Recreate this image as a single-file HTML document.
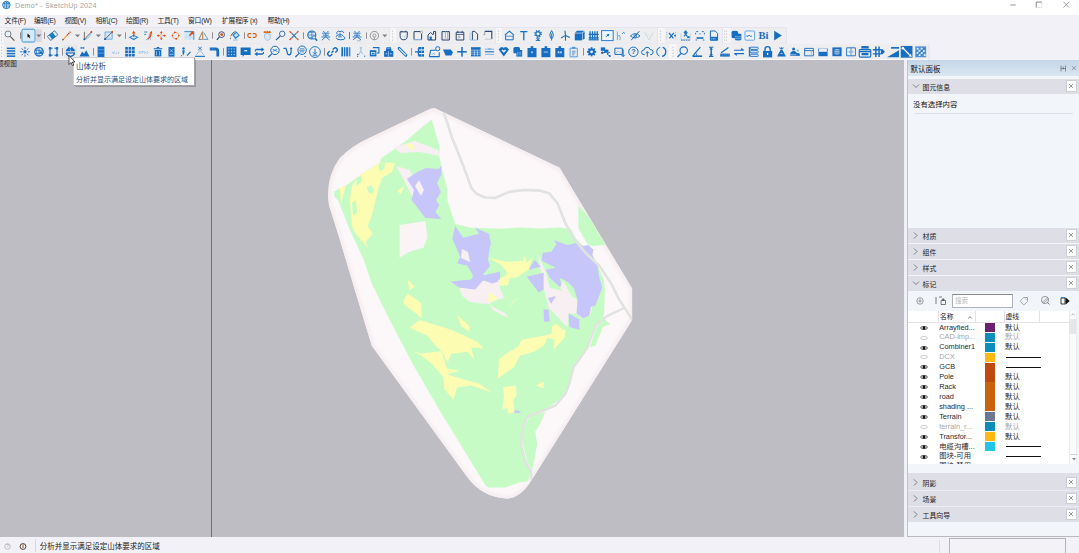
<!DOCTYPE html><html lang="zh"><head><meta charset="utf-8"><title>Demo - SketchUp 2024</title><style>
*{box-sizing:border-box;margin:0;padding:0}
html,body{width:1079px;height:553px;overflow:hidden;background:#f1f1f7}
body{font-family:"Liberation Sans","Noto Sans CJK SC",sans-serif;font-size:7px;color:#111;position:relative}
.abs{position:absolute}
#title{left:0;top:0;width:1079px;height:14.6px;background:#fff}
#title .t{position:absolute;left:15px;top:1px;font-size:7.2px;letter-spacing:0.2px;color:#a4a4a4;white-space:nowrap;line-height:10px}
#title .wc{position:absolute;top:0;height:14px;width:26px;color:#333}
#menu{left:0;top:14.6px;width:1079px;height:12.4px;background:#f1f1f7}
#menu span{position:absolute;top:0.6px;font-size:6.8px;letter-spacing:-0.2px;line-height:11px;color:#1c1c1c;white-space:nowrap}
#tb1{left:0;top:27px;width:1079px;height:17px;background:transparent}
#tb2{left:0;top:44px;width:1079px;height:16px;background:transparent}
#view{left:0;top:60.2px;width:904px;height:476.8px;background:#bdbdc3;overflow:hidden}
#status{left:0;top:537px;width:1079px;height:16px;background:#f1f1f7}
svg{position:absolute;overflow:visible}
</style></head><body>
<div id="title" class="abs"><svg style="left:2.2px;top:0.4px" width="10" height="10" viewBox="0 0 10 10"><circle cx="4.4" cy="5" r="3.7" fill="#e8f2fa" stroke="#1a78c2" stroke-width="1"/><path d="M2.8 2.6v4.8M4.4 1.8v6.4M6 2.6v4.8" stroke="#1a78c2" stroke-width="0.9" fill="none"/><path d="M1.2 3.8Q4.4 2.2 7.6 3.8" stroke="#1a78c2" stroke-width="0.8" fill="none"/></svg><div class="t">Demo* - SketchUp 2024</div><svg style="left:1006px;top:1.4px" width="70" height="8" viewBox="0 0 70 8"><path d="M4.2 4h5.6" stroke="#555" stroke-width="0.6"/><path d="M30.2 6.6V1.1h5.6" fill="none" stroke="#555" stroke-width="0.7"/><path d="M35.8 1.1v5.5h-5.6" fill="none" stroke="#bbb" stroke-width="0.4"/><path d="M57.4 0.8l5.8 5.8M63.2 0.8l-5.8 5.8" stroke="#555" stroke-width="0.55"/></svg></div>
<div id="menu" class="abs"><span style="left:4.6px">文件(F)</span><span style="left:34px">编辑(E)</span><span style="left:64.4px">视图(V)</span><span style="left:95.4px">相机(C)</span><span style="left:126px">绘图(R)</span><span style="left:157.4px">工具(T)</span><span style="left:188px">窗口(W)</span><span style="left:222px">扩展程序 (x)</span><span style="left:267.4px">帮助(H)</span></div>
<div class="abs" style="left:0;top:28px;width:786.4px;height:15.2px;background:#eeeef0"></div>
<div class="abs" style="left:0px;top:28px;width:3.6px;height:15.2px;background:#f6f6f9"></div>
<div class="abs" style="left:389.9px;top:28px;width:6.1px;height:15.2px;background:#f6f6f9"></div>
<div class="abs" style="left:495.9px;top:28px;width:6.1px;height:15.2px;background:#f6f6f9"></div>
<div class="abs" style="left:658px;top:28px;width:6.8px;height:15.2px;background:#f6f6f9"></div>
<div class="abs" style="left:723px;top:28px;width:8.0px;height:15.2px;background:#f6f6f9"></div>
<div class="abs" style="left:0;top:44.4px;width:929px;height:14.6px;background:#eeeef0"></div>
<div class="abs" style="left:0px;top:44.4px;width:3.6px;height:14.6px;background:#f6f6f9"></div>
<div class="abs" style="left:669.4px;top:44.4px;width:7.6px;height:14.6px;background:#f6f6f9"></div>
<div class="abs" style="left:0;top:59px;width:929px;height:1.4px;background:#f7f7fa"></div>
<div id="tb1" class="abs"><svg style="left:0;top:0" width="1079" height="17" viewBox="0 0 1079 17"><rect x="389.1" y="0.2" width="0.8" height="16.4" fill="#e2e2ea"/><rect x="495.1" y="0.2" width="0.8" height="16.4" fill="#e2e2ea"/><rect x="657.2" y="0.2" width="0.8" height="16.4" fill="#e2e2ea"/><rect x="722.2" y="0.2" width="0.8" height="16.4" fill="#e2e2ea"/><rect x="786.0" y="0.2" width="0.8" height="16.4" fill="#e2e2ea"/><rect x="0" y="15.9" width="786.4" height="0.7" fill="#e4e4ec"/><rect x="0" y="0.2" width="786.4" height="0.8" fill="#e3e3ea"/><rect x="1.1500000000000001" y="3.5999999999999996" width="0.9" height="1" fill="#b0b0b8"/><rect x="1.1500000000000001" y="6.6" width="0.9" height="1" fill="#b0b0b8"/><rect x="1.1500000000000001" y="9.6" width="0.9" height="1" fill="#b0b0b8"/><rect x="1.1500000000000001" y="12.6" width="0.9" height="1" fill="#b0b0b8"/><g transform="translate(9.4,8.6)"><circle cx="-1.4" cy="-1.6" r="3" fill="#e8f0f8" stroke="#777" stroke-width="0.9"/><path d="M0.8 0.8L5 5" fill="none" stroke="#555" stroke-width="1.1" /></g><rect x="20.1" y="5.35" width="0.8" height="6.5" fill="#76767c"/><g transform="translate(28.5,8.6)"><rect x="-6.6" y="-6.4" width="13.2" height="12.8" rx="1.6" fill="#d5e9f9" stroke="#2a86d4" stroke-width="0.9"/><rect x="7.2" y="-6.4" width="6.2" height="12.8" fill="#dadade"/><path d="M-1 -2.2v4.2l1-0.9 0.7 1.5 0.8-0.4-0.7-1.5h1.3z" fill="#111" /><path d="M7.700000000000001 -1.0h5.2l-2.6 2.7z" fill="#77777d"/></g><rect x="44.1" y="5.35" width="0.8" height="6.5" fill="#76767c"/><g transform="translate(52.6,8.6)"><g transform="rotate(-38)"><rect x="-4.6" y="-2.6" width="9.2" height="5.2" fill="#e4eef8" /><rect x="-2.6" y="-2.6" width="4.6" height="5.2" fill="#1680c4" /><rect x="-4.6" y="-2.6" width="9.2" height="5.2" fill="none" stroke="#2b5c86" stroke-width="0.7"/></g></g><g transform="translate(66.8,8.6)"><path d="M-3.2 3.4L0.2 -0.2" fill="none" stroke="#f0a040" stroke-width="1.2" /><path d="M0.2 -0.2L3.6 -3.8" fill="none" stroke="#d8341a" stroke-width="1.3" stroke-dasharray="1.3 0.7"/><path d="M-4.6 4.8l0.5-1.9 1.4 1.4z" fill="#333" /></g><path d="M74.9 7.599999999999999h5.2l-2.6 2.7z" fill="#808086"/><g transform="translate(88,8.6)"><path d="M-3.6 -3.8v7.6" fill="none" stroke="#666" stroke-width="0.9" /><path d="M-3.6 3.8L3.4 -3.6" fill="none" stroke="#555" stroke-width="0.9" /><path d="M-3.6 3.8Q2 3 3.4 -3.6" fill="none" stroke="#7fb2e0" stroke-width="0.8" /><circle cx="3.4" cy="-3.6" r="1" fill="#e0451a" stroke="#e0451a" stroke-width="0"/><rect x="-4.4" y="3" width="1.6" height="1.6" fill="#0d4f90" /></g><path d="M95.80000000000001 7.599999999999999h5.2l-2.6 2.7z" fill="#808086"/><g transform="translate(108.6,8.6)"><rect x="-3.6" y="-3.6" width="7.2" height="7.2" fill="#cfe4f6" /><path d="M-3.6 -3.6h7.2v7.2h-7.2z" fill="none" stroke="#5a9ed8" stroke-width="0.8" /><path d="M-3.6 3.6L3.6 -3.6" fill="none" stroke="#555" stroke-width="0.9" /><circle cx="3.6" cy="-3.6" r="1" fill="#e0451a" stroke="#e0451a" stroke-width="0"/><rect x="-4.4" y="2.8" width="1.6" height="1.6" fill="#0d4f90" /></g><path d="M116.80000000000001 7.599999999999999h5.2l-2.6 2.7z" fill="#808086"/><rect x="125.1" y="5.35" width="0.8" height="6.5" fill="#76767c"/><g transform="translate(133.7,8.6)"><path d="M-5 1.6L0 -0.8L5 1.6L0 4.6z" fill="#2a86d4" /><path d="M-3 1.6L0 0.2L3 1.6L0 3.2z" fill="#cfe4f6" /><path d="M0 1.2v-3.4" fill="none" stroke="#dc4a14" stroke-width="1.3" /><path d="M-1.8 -2l1.8-2.8 1.8 2.8z" fill="#dc4a14" /></g><g transform="translate(147.8,8.6)"><path d="M-3.6 -3.6h3.2M-3.6 -1.2h2" fill="none" stroke="#166dc1" stroke-width="0.8" /><path d="M-1.6 4.4Q2.4 2.4 1.6 -2" fill="none" stroke="#7fb2e0" stroke-width="1.1" /><path d="M0.2 3.4Q3.6 1 3.2 -2.8" fill="none" stroke="#e0451a" stroke-width="1.2" /><path d="M1.8 -2.4l1.8-2.4 1 2.8z" fill="#dc4a14" /><path d="M2.6 2.4v2.2" fill="none" stroke="#7fb2e0" stroke-width="0.8" /></g><g transform="translate(161.3,8.6)"><path d="M-3.8 0h7.6M0 -3.8v7.6" fill="none" stroke="#dc4a14" stroke-width="0.8" /><path d="M-1.3 -2.6L0 -4.6 1.3 -2.6zM-1.3 2.6L0 4.6 1.3 2.6zM-2.6 -1.3L-4.6 0-2.6 1.3zM2.6 -1.3L4.6 0 2.6 1.3z" fill="#dc4a14" /><circle cx="0" cy="0" r="1.2" fill="#eeeef0" stroke="#eeeef0" stroke-width="0"/></g><g transform="translate(175.6,8.6)"><circle cx="0" cy="0" r="3.2" fill="none" stroke="#f0a468" stroke-width="0.9"/><path d="M-1.4 -4.2L1.2 -3.3L-1.4 -2.2zM1.4 4.2L-1.2 3.3L1.4 2.2z" fill="#dc4a14" /><rect x="-3.9" y="-0.6" width="1.4" height="1.2" fill="#dc4a14" /><rect x="2.5" y="-0.6" width="1.4" height="1.2" fill="#dc4a14" /><rect x="-1.2" y="-3.4" width="2.6" height="1.1" fill="#eeeef0"  opacity="0"/></g><g transform="translate(189.2,8.6)"><rect x="-4.8" y="-4" width="9.4" height="8.2" fill="#d2e7f8" /><path d="M-4.8 -4h9.4v8.2" fill="none" stroke="#3a92dc" stroke-width="1" /><path d="M0.8 -3.4v7.4M-4.8 1.4h9" fill="none" stroke="#b4d4ee" stroke-width="0.5" /><path d="M0.2 0.2L3 -2.8" fill="none" stroke="#dc4a14" stroke-width="1.5" /><path d="M0.8 -4h3.6v3.6z" fill="#dc4a14" /></g><g transform="translate(203.4,8.6)"><path d="M-4.6 3.8L-0.8 -4L-0.8 3.8z" fill="none" stroke="#777" stroke-width="0.9" /><path d="M-0.2 3.8h4.8L0.4 -2.8" fill="none" stroke="#4c96d8" stroke-width="0.9" /><path d="M-0.6 -3.4v7" fill="none" stroke="#f0a030" stroke-width="0.8" /></g><rect x="212.1" y="5.35" width="0.8" height="6.5" fill="#76767c"/><g transform="translate(220.8,8.6)"><circle cx="0.8" cy="-1" r="2.9" fill="#eeeef0" stroke="#2c4a78" stroke-width="0.9"/><circle cx="0.9" cy="-1" r="1.4" fill="#dc4a14" stroke="#dc4a14" stroke-width="0"/><path d="M-1.4 1.2L-4 4.2" fill="none" stroke="#2c4a78" stroke-width="1.1" /></g><g transform="translate(235,8.6)"><path d="M-2.8 -0.8L1.6 -4.2L4.8 0L0.4 3.6z" fill="#2a86d4" /><path d="M-1 -0.6L1.6 -2.6L3.2 -0.4L0.6 1.6z" fill="#cfe4f6" /><path d="M-4.4 0.6Q-2.4 -3.6 0.6 -4.2" fill="none" stroke="#555" stroke-width="0.9" /><path d="M-4.8 1.6Q-3.6 3 -4.4 4Q-5.6 3 -4.8 1.6z" fill="#555" /><path d="M-1.8 4.4h4.6" fill="none" stroke="#7fb2e0" stroke-width="0.8" /></g><rect x="244.1" y="5.35" width="0.8" height="6.5" fill="#76767c"/><g transform="translate(252,8.6)"><path d="M-1 -2H-2.8Q-4.2 -2 -4.2 -0.1Q-4.2 1.8 -2.8 1.8H-1M1 -2H2.8Q4.2 -2 4.2 -0.1Q4.2 1.8 2.8 1.8H1" fill="none" stroke="#e0560f" stroke-width="1.15" /><path d="M0 -4.4v8.8" fill="none" stroke="#c4d8ea" stroke-width="0.7" /></g><g transform="translate(267,8.6)"><path d="M-2.6 -0.6Q-2.6 -2.2 0.4 -2.2Q3.4 -2.2 3.4 0.4Q3.4 4.6 0.6 4.6Q-2.6 4.6 -2.6 -0.6z" fill="#dbe9f6" /><path d="M-2.6 -0.6Q-2.6 -2.2 0.4 -2.2Q3.4 -2.2 3.4 0.4Q3.4 4.6 0.6 4.6Q-2.6 4.6 -2.6 -0.6z" fill="none" stroke="#7fb2e0" stroke-width="0.7" /><path d="M-3.4 -3.4h7.2" fill="none" stroke="#e8741a" stroke-width="1.5" /><path d="M-2 -4.6v2M0.4 -4.8v2M2.6 -4.6v2" fill="none" stroke="#dc4a14" stroke-width="0.9" /></g><g transform="translate(280.6,8.6)"><circle cx="1.6" cy="-1.8" r="2.7" fill="#f6f8fc" stroke="#2c5f9a" stroke-width="0.9"/><path d="M-0.4 0.4L-4.6 4.6" fill="none" stroke="#2c5f9a" stroke-width="1.2" /></g><g transform="translate(294,8.6)"><path d="M-2.4 -2.4l4.8 4.8M2.4 -2.4l-4.8 4.8" fill="none" stroke="#3a78bc" stroke-width="1.2" /><path d="M-4.4 -4.4l1.8 1.8M4.4 -4.4l-1.8 1.8M-4.4 4.4l1.8-1.8M4.4 4.4l-1.8-1.8" fill="none" stroke="#dc4a14" stroke-width="1.2" /></g><rect x="303.1" y="5.35" width="0.8" height="6.5" fill="#76767c"/><g transform="translate(312.2,8.6)"><circle cx="-0.4" cy="-0.6" r="4" fill="none" stroke="#166dc1" stroke-width="1.1"/><path d="M-0.4 -4.6v8M-4.4 -0.6h8M-3 -3h5.2M-3 1.8h5.2" fill="none" stroke="#166dc1" stroke-width="0.6" /><path d="M2.6 2.6L5 5" fill="none" stroke="#166dc1" stroke-width="1.5" /><circle cx="1.8" cy="1.8" r="1.6" fill="#eeeef0" stroke="#166dc1" stroke-width="0.8"/></g><g transform="translate(325.8,8.6)"><path d="M-2.6 -4.6l1.4 1.6M2.6 -4.6l-1.4 1.6M-3.6 -2.4h7.2M-3 -0.4h6M-4.4 1.4h8.8M0 -2.4v3.8M-0.4 1.6L-4 4.6M0.4 1.6L4 4.6" fill="none" stroke="#166dc1" stroke-width="0.85" /></g><g transform="translate(340.6,8.6)"><path d="M-3.4 -1.4a1.8 1.8 0 0 1 2.8-2.4a2.2 2.2 0 0 1 3.8 1.2" fill="none" stroke="#166dc1" stroke-width="0.9" /><path d="M-4.4 1.2Q-4.4 -0.8 -1.6 -0.8H1.2Q3 0.8 4.6 2.4" fill="none" stroke="#166dc1" stroke-width="0.9" /><path d="M-4.4 2.2Q-4 4.2 0 4.2Q4 4.2 4.6 2.6" fill="none" stroke="#166dc1" stroke-width="1" /><path d="M-2.4 1.2h3.6M-0.6 -3v4" fill="none" stroke="#166dc1" stroke-width="0.8" /></g><rect x="349.1" y="5.1" width="0.8" height="7" fill="#555"/><g transform="translate(357,8.6)"><path d="M-2.6 -4.6l1.4 1.6M2.6 -4.6l-1.4 1.6M-3.6 -2.4h7.2M-3 -0.4h6M-4.4 1.4h8.8M0 -2.4v3.8M-0.4 1.6L-4 4.2M0.4 1.6L4 4.2" fill="none" stroke="#166dc1" stroke-width="0.85" /><path d="M0.4 5.2h4" fill="none" stroke="#166dc1" stroke-width="0.8" stroke-dasharray="1 1"/></g><rect x="366.1" y="5.35" width="0.8" height="6.5" fill="#76767c"/><g transform="translate(374.4,8.6)"><circle cx="0" cy="0" r="4.2" fill="none" stroke="#8a8a90" stroke-width="0.9"/><circle cx="0" cy="0" r="1.6" fill="none" stroke="#8a8a90" stroke-width="0.8"/><path d="M0 1.6v2.6" fill="none" stroke="#8a8a90" stroke-width="0.8" /></g><path d="M382.2 7.599999999999999h5.2l-2.6 2.7z" fill="#808086"/><rect x="392.15000000000003" y="3.5999999999999996" width="0.9" height="1" fill="#b0b0b8"/><rect x="392.15000000000003" y="6.6" width="0.9" height="1" fill="#b0b0b8"/><rect x="392.15000000000003" y="9.6" width="0.9" height="1" fill="#b0b0b8"/><rect x="392.15000000000003" y="12.6" width="0.9" height="1" fill="#b0b0b8"/><g transform="translate(403.7,8.6)"><path d="M-3.6 -3.8h7.2v3.8Q3.6 4.2 0 4.2Q-3.6 4.2 -3.6 0z" fill="none" stroke="#27456f" stroke-width="1" /><path d="M-2 -4.8v1.4M2 -4.8v1.4" fill="none" stroke="#27456f" stroke-width="0.8" /><path d="M0.2 0h2.4l-2.4 2.8z" fill="#c4dcf0" /></g><g transform="translate(418,8.6)"><path d="M-4 -4h7.6v8h-7.6z" fill="none" stroke="#27456f" stroke-width="1" /><circle cx="3.4" cy="-3.4" r="1.2" fill="#eeeef0" stroke="#999" stroke-width="0.7"/><path d="M-4 4h7.6" fill="none" stroke="#8fb8dc" stroke-width="1" /></g><g transform="translate(432,8.6)"><path d="M-4 4.4V-0.6L-1.4 -3.2L1.2 -0.6M3.6 4.4V-4.2H1.6v3" fill="none" stroke="#27456f" stroke-width="1" /><rect x="-2.4" y="1" width="2.2" height="3.4" fill="#166dc1" /><path d="M-4 4.4h7.6" fill="none" stroke="#27456f" stroke-width="1" /></g><g transform="translate(445.8,8.6)"><path d="M-3.8 -4h7.4v8.4h-7.4z" fill="none" stroke="#27456f" stroke-width="1" /><path d="M-0.4 -4v8.4" fill="none" stroke="#8fb8dc" stroke-width="1" /><path d="M1.8 -4v8.4" fill="none" stroke="#999" stroke-width="0.7" /></g><g transform="translate(460,8.6)"><path d="M-3.8 -3.4h7.6v7.8h-7.6z" fill="none" stroke="#27456f" stroke-width="1" /><path d="M-3.8 -1.2h7.6" fill="none" stroke="#27456f" stroke-width="0.8" /><path d="M-2.2 -4.8v2M2.2 -4.8v2" fill="none" stroke="#27456f" stroke-width="0.8" /><path d="M-2.2 0.6h2v1.6h-2" fill="none" stroke="#888" stroke-width="0.6" /></g><g transform="translate(473.8,8.6)"><path d="M-1.4 4.4V-4.2H1L3.8 -1.4V4.4" fill="none" stroke="#27456f" stroke-width="1" /><path d="M-3.8 4.4V-2.4h2.4" fill="none" stroke="#b8c4d0" stroke-width="0.9" /><path d="M-3.8 4.4h7.6" fill="none" stroke="#8fb8dc" stroke-width="0.9" /></g><g transform="translate(488,8.6)"><path d="M-3.2 -4.2h7v7.6" fill="none" stroke="#27456f" stroke-width="1.1" /><path d="M-3.2 -4.2v3.2h-1.4" fill="none" stroke="#888" stroke-width="0.8" /><path d="M-3.2 3.6h7" fill="none" stroke="#c4c8d0" stroke-width="1" /></g><rect x="497.95" y="3.5999999999999996" width="0.9" height="1" fill="#b0b0b8"/><rect x="497.95" y="6.6" width="0.9" height="1" fill="#b0b0b8"/><rect x="497.95" y="9.6" width="0.9" height="1" fill="#b0b0b8"/><rect x="497.95" y="12.6" width="0.9" height="1" fill="#b0b0b8"/><g transform="translate(509.4,8.6)"><path d="M-4.6 -0.4L0 -4.4L4.6 -0.4" fill="none" stroke="#166dc1" stroke-width="1.1" /><path d="M-3.8 -0.2V4.2H3.8V-0.2" fill="none" stroke="#166dc1" stroke-width="1" /><path d="M-3.8 0.6h7.6" fill="none" stroke="#166dc1" stroke-width="0.7" /></g><g transform="translate(523.8,8.6)"><path d="M-3.6 -4h7.2M0 -4v8.6" fill="none" stroke="#166dc1" stroke-width="1.3" /></g><g transform="translate(538,8.6)"><circle cx="0" cy="-1.8" r="2.2" fill="none" stroke="#166dc1" stroke-width="1.2"/><circle cx="0" cy="-1.8" r="3.3" fill="none" stroke="#166dc1" stroke-width="1.2" stroke-dasharray="1.3 1.3"/><path d="M0 1v3.8M-2.2 4.8h4.4M-1.6 2.8L0 3.8l1.6-1" fill="none" stroke="#166dc1" stroke-width="1" /></g><g transform="translate(551.6,8.6)"><path d="M0 -5Q-3.4 0 0 3.4Q3.4 0 0 -5z" fill="none" stroke="#166dc1" stroke-width="1" /><path d="M0 -2v7" fill="none" stroke="#166dc1" stroke-width="0.9" /></g><g transform="translate(565.5,8.6)"><path d="M0 0.4v4.8" fill="none" stroke="#166dc1" stroke-width="1" /><path d="M0 -0.2L-0.6 -5M0 -0.2L4.4 2M0 -0.2L-4.4 2.4" fill="none" stroke="#166dc1" stroke-width="1.1" /></g><g transform="translate(579.6,8.6)"><path d="M-4.8 -2.2h7.2v7h-7.2z" fill="#166dc1" /><path d="M-4.8 -2.8L-2.6 -4.8H4.8L2.4 -2.8z" fill="#166dc1" /><path d="M3 -2.4L5 -4.4V2.6L3 4.6z" fill="#166dc1" /></g><g transform="translate(593.7,8.6)"><path d="M-3.6 -4.4v8M-1.2 -4.4v8M1.2 -4.4v8M3.6 -4.4v8" fill="none" stroke="#166dc1" stroke-width="1.3" /><path d="M-5 -1.2h10M-5 2.2h10" fill="none" stroke="#166dc1" stroke-width="1.2" /><rect x="-5" y="3.6" width="10" height="1.2" fill="#166dc1" /></g><g transform="translate(607.4,8.6)"><rect x="-5.8" y="-5" width="11.6" height="10" fill="#eef5fc" stroke="#2a7fd0" stroke-width="1"/><path d="M-1 -1.2l3-0.6-0.8 2.8-0.8-0.8-1.4 1.2-0.6-0.6 1.4-1.2z" fill="#166dc1" /></g><g transform="translate(620.6,8.6)"><path d="M-3.2 -4v8.6M-3.2 0.6Q-0.6 -1 -0.6 1.4V4.6" fill="none" stroke="#7fb2e0" stroke-width="1.1" /><path d="M1.4 -1.6l1.6-1.6 1.4 1.2" fill="none" stroke="#166dc1" stroke-width="0.8" /></g><g transform="translate(635.2,8.6)"><path d="M-4.8 0.4Q0 -4.4 4.8 0.4Q0 4.4 -4.8 0.4z" fill="none" stroke="#166dc1" stroke-width="0.9" /><circle cx="0" cy="0.4" r="1.3" fill="none" stroke="#166dc1" stroke-width="0.8"/><path d="M-4 4.6L4.2 -4.4" fill="none" stroke="#166dc1" stroke-width="1" /></g><g transform="translate(649,8.6)"><path d="M-4.4 -3.4L0 4.4L4.4 -3.4" fill="none" stroke="#c8d4e2" stroke-width="0.8" /><path d="M-2.2 -3.4L0 0.6 2.2 -3.4" fill="none" stroke="#dde4ee" stroke-width="0.6" /></g><rect x="660.15" y="3.5999999999999996" width="0.9" height="1" fill="#b0b0b8"/><rect x="660.15" y="6.6" width="0.9" height="1" fill="#b0b0b8"/><rect x="660.15" y="9.6" width="0.9" height="1" fill="#b0b0b8"/><rect x="660.15" y="12.6" width="0.9" height="1" fill="#b0b0b8"/><g transform="translate(671.4,8.6)"><path d="M-2.4 -2.8l4.4 5.6M2.4 -2.8l-4.4 5.6" fill="none" stroke="#166dc1" stroke-width="1.2" /><path d="M-4.6 -3.6v7.2M4.2 -3.6v7.2" fill="none" stroke="#7fb2e0" stroke-width="0.8" stroke-dasharray="1.2 1"/><rect x="2.8" y="-0.8" width="1.6" height="1.6" fill="#166dc1" /></g><g transform="translate(685.6,8.6)"><path d="M-1.6 -3.6l3.2 4.4M1.8 -3.6l-3.4 4.4" fill="none" stroke="#166dc1" stroke-width="1.2" /><circle cx="0" cy="-3.8" r="1.2" fill="#166dc1" stroke="#166dc1" stroke-width="0"/><path d="M-4.6 -2v5.8h9.2v-5.8" fill="none" stroke="#7fb2e0" stroke-width="0.8" stroke-dasharray="1.2 0.8"/><path d="M-4.6 4.6h9.2" fill="none" stroke="#166dc1" stroke-width="0.9" stroke-dasharray="1.6 0.8"/><rect x="1.6" y="0.6" width="2.4" height="2" fill="#166dc1" /></g><g transform="translate(700,8.6)"><path d="M-3.8 -4h2M3.8 -4h-2M-4.4 -2.8v1.6M4.4 -2.8v1.6" fill="none" stroke="#166dc1" stroke-width="0.9" /><path d="M-1.2 -0.8L0 -2.6 1.2 -0.8" fill="none" stroke="#7fb2e0" stroke-width="0.8" /><rect x="-3.4" y="1.6" width="6.8" height="1.6" fill="#166dc1" /><path d="M-4.4 4.4h1.6M4.4 4.4h-1.6" fill="none" stroke="#166dc1" stroke-width="0.9" /></g><g transform="translate(714,8.6)"><path d="M-3.6 -4.6h4.8L3.6 -2.2V4.6h-7.2z" fill="none" stroke="#166dc1" stroke-width="1" /><rect x="-3.6" y="1.2" width="7.2" height="3.6" fill="#166dc1" /><path d="M-2.2 2.4v1.6M-0.6 2.4v1.6M1 2.4v1.6" fill="none" stroke="#cfe2f4" stroke-width="0.6" /></g><rect x="724.15" y="3.5999999999999996" width="0.9" height="1" fill="#b0b0b8"/><rect x="724.15" y="6.6" width="0.9" height="1" fill="#b0b0b8"/><rect x="724.15" y="9.6" width="0.9" height="1" fill="#b0b0b8"/><rect x="724.15" y="12.6" width="0.9" height="1" fill="#b0b0b8"/><rect x="726.15" y="3.5999999999999996" width="0.9" height="1" fill="#b0b0b8"/><rect x="726.15" y="6.6" width="0.9" height="1" fill="#b0b0b8"/><rect x="726.15" y="9.6" width="0.9" height="1" fill="#b0b0b8"/><rect x="726.15" y="12.6" width="0.9" height="1" fill="#b0b0b8"/><g transform="translate(736.4,8.6)"><path d="M-4.8 -3.4Q-4.8 -4.8 -1.6 -4.8Q1.6 -4.8 1.6 -3.4V1.4Q1.6 2.6 -1.6 2.6Q-4.8 2.6 -4.8 1.4z" fill="#166dc1" /><path d="M-1.4 -0.8Q-1.4 -2 1.8 -2Q5 -2 5 -0.8V3.6Q5 4.8 1.8 4.8Q-1.4 4.8 -1.4 3.6z" fill="#166dc1" /><path d="M-1.4 0.8Q1.8 2 5 0.8M-1.4 2.6Q1.8 3.8 5 2.6" fill="none" stroke="#cfe2f4" stroke-width="0.5" /></g><g transform="translate(749.8,8.6)"><rect x="-4.8" y="-4.6" width="9.6" height="9.2" rx="1" fill="#eef4fa" stroke="#5a9ed8" stroke-width="0.9"/><path d="M-2.6 0.6h1.2l0.8-1.2 0.8 1.2h2" fill="none" stroke="#166dc1" stroke-width="0.8" /><path d="M-2.8 -0.4v1.8" fill="none" stroke="#166dc1" stroke-width="0.7" /></g><g transform="translate(763.4,8.6)"><text x="0" y="3.6" font-size="10.5" fill="#166dc1" font-weight="bold" text-anchor="middle" font-family="Liberation Serif, serif">Bi</text></g><g transform="translate(777.6,8.6)"><path d="M-3.4 -4.8L4.2 0L-3.4 4.8z" fill="#166dc1" /></g></svg></div>
<div id="tb2" class="abs"><svg style="left:0;top:0" width="1079" height="16" viewBox="0 0 1079 16"><rect x="63.6" y="1" width="13.8" height="13.8" fill="#e6e6ea"/><rect x="1.1500000000000001" y="2.8" width="0.9" height="1" fill="#b0b0b8"/><rect x="1.1500000000000001" y="5.8" width="0.9" height="1" fill="#b0b0b8"/><rect x="1.1500000000000001" y="8.8" width="0.9" height="1" fill="#b0b0b8"/><rect x="1.1500000000000001" y="11.8" width="0.9" height="1" fill="#b0b0b8"/><g transform="translate(11,7.8)"><rect x="-4.2" y="-4.2" width="8.4" height="1.5" fill="#166dc1" /><rect x="-4.2" y="-1.6" width="8.4" height="1.5" fill="#166dc1" /><rect x="-4.2" y="1" width="8.4" height="1.5" fill="#166dc1" /><rect x="-4.2" y="3.6" width="8.4" height="1.5" fill="#166dc1" /></g><g transform="translate(25,7.8)"><circle cx="0" cy="0" r="1.7" fill="#166dc1" stroke="#166dc1" stroke-width="0"/><path d="M0 -5v2.3M0 2.7v2.3M-5 0h2.3M2.7 0h2.3M-3.5 -3.5l1.6 1.6M1.9 1.9l1.6 1.6M3.5 -3.5l-1.6 1.6M-1.9 1.9l-1.6 1.6" fill="none" stroke="#166dc1" stroke-width="0.9" /></g><g transform="translate(39,7.8)"><circle cx="0" cy="0" r="4.3" fill="none" stroke="#166dc1" stroke-width="1.1"/><path d="M0 -4.3v8.6M-4 -1.5h8M-4 1.5h8M-1 -4C-3 -2 -3 2 -1 4" fill="none" stroke="#166dc1" stroke-width="0.8" /><rect x="0.5" y="-0.5" width="3" height="2.5" fill="#166dc1" /></g><g transform="translate(53.5,7.8)"><path d="M-3.5 -3.5h7v7h-7z" fill="none" stroke="#166dc1" stroke-width="1.1" /><rect x="-4.7" y="-4.7" width="2.4" height="2.4" fill="#166dc1" /><rect x="-4.7" y="2.3" width="2.4" height="2.4" fill="#166dc1" /><rect x="2.3" y="-4.7" width="2.4" height="2.4" fill="#166dc1" /><rect x="2.3" y="2.3" width="2.4" height="2.4" fill="#166dc1" /><rect x="-0.9" y="-4.6" width="1.8" height="2" fill="#eeeef0" /><rect x="-0.9" y="2.6" width="1.8" height="2" fill="#eeeef0" /></g><rect x="62.1" y="4.05" width="0.8" height="7.5" fill="#76767c"/><g transform="translate(70.4,7.8)"><path d="M-4.6 -0.6Q-4.4 -3 -2.6 -3.6L-1.6 -5.2L0 -3.4L1.6 -5.2L2.6 -3.6Q4.4 -3 4.6 -0.6z" fill="#166dc1" /><path d="M-1 -3l1 1.2 1-1.2-1 2.4z" fill="#e9e9f0" /><path d="M-4 1.2Q-3.6 4.2 0 4.6Q3.6 4.2 4 1.2" fill="none" stroke="#166dc1" stroke-width="1.5" /><rect x="-4.6" y="0.6" width="9.2" height="1.1" fill="#166dc1" /></g><g transform="translate(84.4,7.8)"><path d="M-5 4.6L-2.2 -0.4L-0.4 2L1.8 -1.6L5.2 4.6z" fill="#166dc1" /><path d="M-3.4 -4.9v2M-0.6 -4.9v2M-3.4 -3.9h2.8" fill="none" stroke="#166dc1" stroke-width="0.9" /></g><rect x="93.1" y="4.05" width="0.8" height="7.5" fill="#76767c"/><g transform="translate(101,7.8)"><rect x="-3.4" y="-5.2" width="6.8" height="10.6" fill="#166dc1" /><rect x="-3.2" y="-2.2" width="6.4" height="0.5" fill="#9cc4ea" /><rect x="-3.2" y="1" width="6.4" height="0.5" fill="#9cc4ea" /></g><g transform="translate(115.6,7.8)"><path d="M-3.5 0l1.5 2l1.2-2.5M0 1.5h1.5M2.2 0c1.5 0 1.5 2 0 2" fill="none" stroke="#7fb2e0" stroke-width="0.7" /></g><g transform="translate(130,7.8)"><rect x="-4.8" y="-4.8" width="2.7" height="2.7" fill="#166dc1" /><rect x="-4.8" y="-1.4" width="2.7" height="2.7" fill="#166dc1" /><rect x="-4.8" y="2" width="2.7" height="2.7" fill="#166dc1" /><rect x="-1.4" y="-4.8" width="2.7" height="2.7" fill="#166dc1" /><rect x="-1.4" y="-1.4" width="2.7" height="2.7" fill="#166dc1" /><rect x="-1.4" y="2" width="2.7" height="2.7" fill="#166dc1" /><rect x="2" y="-4.8" width="2.7" height="2.7" fill="#166dc1" /><rect x="2" y="-1.4" width="2.7" height="2.7" fill="#166dc1" /><rect x="2" y="2" width="2.7" height="2.7" fill="#166dc1" /></g><g transform="translate(143.7,7.8)"><path d="M-5 -0.5l1 2.2 1-2.2M-2.4 -0.3h2l-1.2 2.2M0.5 -0.3c1.6 0 1.6 2 0 2M3 -0.3c1.6 0 1.6 2.2 0 2.2" fill="none" stroke="#7fb2e0" stroke-width="0.7" /></g><g transform="translate(158,7.8)"><rect x="-3.3" y="-1.8" width="6.6" height="6.4" fill="#166dc1" /><rect x="-4.2" y="-3.6" width="8.4" height="1.1" fill="#166dc1" /><rect x="-1.3" y="-4.8" width="2.6" height="1" fill="#166dc1" /><rect x="-1.6" y="-0.6" width="0.6" height="4.2" fill="#cfe2f4" /><rect x="1" y="-0.6" width="0.6" height="4.2" fill="#cfe2f4" /></g><g transform="translate(171.5,7.8)"><rect x="-3" y="-4.8" width="6" height="9.6" fill="#166dc1" /><path d="M-1.5 -2.5l3 3M1.5 -2.5l-3 3M-2 2.5h4" fill="none" stroke="#cfe2f4" stroke-width="0.7" /></g><g transform="translate(185.5,7.8)"><circle cx="-2" cy="-3.3" r="1.2" fill="#166dc1" stroke="#166dc1" stroke-width="0"/><path d="M-3.2 -1.6h2.4l-0.5 3-1.2 2.6z" fill="#166dc1" /><path d="M1.5 3.8L5 0" fill="none" stroke="#166dc1" stroke-width="1.2" /><path d="M-4.6 4.4l1.4-1.2" fill="none" stroke="#166dc1" stroke-width="0.9" /></g><g transform="translate(200,7.8)"><path d="M-1.8 -5l3.6 3.2M1.8 -5l-3.6 3.2" fill="none" stroke="#166dc1" stroke-width="0.9" /><path d="M0 -1.5L-3.6 3M0 -1.5L3.6 3" fill="none" stroke="#7fb2e0" stroke-width="0.8" /><rect x="-5" y="4" width="10" height="1.1" fill="#166dc1" /></g><g transform="translate(214.4,7.8)"><path d="M-4.6 -2.8H1.2Q3.4 -2.8 3.4 -0.5V4.8" fill="none" stroke="#166dc1" stroke-width="2.8" /><path d="M-3.8 -2.8h4" fill="none" stroke="#9cc4ea" stroke-width="0.5" stroke-dasharray="0.8 0.8"/></g><rect x="223.1" y="4.05" width="0.8" height="7.5" fill="#76767c"/><g transform="translate(231.5,7.8)"><rect x="-4.9" y="-5.1" width="9.8" height="10.2" fill="#166dc1" /><rect x="-3.2" y="-3.4" width="1.1" height="1.1" fill="#cfe2f4" /><rect x="-3.2" y="-0.55" width="1.1" height="1.1" fill="#cfe2f4" /><rect x="-3.2" y="2.3" width="1.1" height="1.1" fill="#cfe2f4" /><rect x="-0.55" y="-3.4" width="1.1" height="1.1" fill="#cfe2f4" /><rect x="-0.55" y="-0.55" width="1.1" height="1.1" fill="#cfe2f4" /><rect x="-0.55" y="2.3" width="1.1" height="1.1" fill="#cfe2f4" /><rect x="2.1" y="-3.4" width="1.1" height="1.1" fill="#cfe2f4" /><rect x="2.1" y="-0.55" width="1.1" height="1.1" fill="#cfe2f4" /><rect x="2.1" y="2.3" width="1.1" height="1.1" fill="#cfe2f4" /></g><g transform="translate(245.6,7.8)"><path d="M-5 -4.4h10v7.6h-6.4l-1.6 2v-2h-2z" fill="#166dc1" /><rect x="-1.4" y="-1.6" width="3" height="1.1" fill="#fff" /></g><g transform="translate(259.4,7.8)"><path d="M-3.6 -2.2h6.4M3.6 2.2h-6.4" fill="none" stroke="#166dc1" stroke-width="1.5" /><path d="M2 -4.4l3 2.2-3 2.2zM-2 0l-3 2.2 3 2.2z" fill="#166dc1" /><path d="M-4 -2.2v2M4 2.2v-2" fill="none" stroke="#166dc1" stroke-width="1.1" /></g><g transform="translate(273.7,7.8)"><circle cx="1.3" cy="-1.4" r="4.2" fill="none" stroke="#166dc1" stroke-width="1"/><path d="M-1.8 1.8L-5.4 5.4" fill="none" stroke="#166dc1" stroke-width="1.3" /><path d="M-1.2 -2.6L3.8 -0.2M-1 -0.2L3.4 -2.8" fill="none" stroke="#166dc1" stroke-width="0.7" /></g><g transform="translate(287.5,7.8)"><path d="M-4 -3.5h2.4l1.2 3.5M-0.4 0c0 4 4 4 4 0v-3.5" fill="none" stroke="#166dc1" stroke-width="1.2" /><path d="M2.2 -2.8l1.4-2 1.4 2z" fill="#166dc1" /></g><g transform="translate(300.8,7.8)"><circle cx="1.3" cy="-1.6" r="4.2" fill="none" stroke="#166dc1" stroke-width="1"/><path d="M-1.8 1.6L-5.4 5.2" fill="none" stroke="#166dc1" stroke-width="1.3" /><path d="M-1 -3h4.6M-1.4 -1.5h5.4M-1 0h4.4" fill="none" stroke="#166dc1" stroke-width="0.7" /><rect x="3.4" y="4.4" width="1.8" height="0.7" fill="#166dc1" /></g><g transform="translate(315,7.8)"><circle cx="0" cy="0.2" r="5.4" fill="none" stroke="#166dc1" stroke-width="0.9"/><path d="M0 -3v5M-2 0.4l2 2 2-2M-2.4 3.4h4.8" fill="none" stroke="#166dc1" stroke-width="0.9" /></g><rect x="324.1" y="4.05" width="0.8" height="7.5" fill="#76767c"/><g transform="translate(332.5,7.8)"><path d="M-1 1l2-2" fill="none" stroke="#166dc1" stroke-width="1.4" /><path d="M0.2 -2.2l1.2-1.2a1.9 1.9 0 0 1 2.8 2.8l-1.4 1.4" fill="none" stroke="#166dc1" stroke-width="1.4" /><path d="M-0.2 2.2l-1.2 1.2a1.9 1.9 0 0 1-2.8-2.8l1.4-1.4" fill="none" stroke="#166dc1" stroke-width="1.4" /></g><g transform="translate(346.2,7.8)"><rect x="-4.8" y="-4.6" width="1.7" height="9.2" fill="#166dc1" /><rect x="-2.2" y="-4.6" width="1.3" height="9.2" fill="#166dc1" /><rect x="0" y="-4.6" width="1.7" height="9.2" fill="#166dc1" /><rect x="2.6" y="-4.6" width="1" height="9.2" fill="#166dc1" /><rect x="4.2" y="-4.6" width="0.6" height="9.2" fill="#7fb2e0" /></g><g transform="translate(360.6,7.8)"><path d="M-1 -4h2.6M0.3 -4v3.4M0.3 -0.6L-2.2 3.5M0.3 -0.6l2 3" fill="none" stroke="#7fb2e0" stroke-width="0.8" /><rect x="-3.6" y="2" width="1.2" height="1.2" fill="#166dc1" /><rect x="-3.6" y="4" width="1.2" height="1" fill="#166dc1" /><rect x="3.6" y="3.8" width="1" height="1.2" fill="#166dc1" /></g><g transform="translate(374.4,7.8)"><path d="M-1.5 -4.2h6v5.4h-2" fill="none" stroke="#166dc1" stroke-width="1.1" /><path d="M-4.6 -1.6h6.6v6.2h-6.6z" fill="#166dc1" /><rect x="-3.4" y="0.2" width="4.2" height="2.6" fill="#e4eef8" /><rect x="-2.6" y="1" width="2.6" height="1.2" fill="#166dc1" /></g><g transform="translate(388.7,7.8)"><path d="M-4.6 -0.8h9.2v5.8h-9.2z" fill="#166dc1" /><path d="M-3 -0.6L-2.2 -4.6H2.2L3 -0.6z" fill="#166dc1" /><rect x="-0.3" y="-0.6" width="0.6" height="5.4" fill="#cfe2f4" /><rect x="-3" y="1.6" width="1.8" height="0.8" fill="#cfe2f4" /><rect x="1.2" y="1.6" width="1.8" height="0.8" fill="#cfe2f4" /><rect x="-1.4" y="-3.4" width="2.8" height="0.6" fill="#9cc4ea" /></g><g transform="translate(402.5,7.8)"><path d="M-3.4 -3.4l6.8 6.8" fill="none" stroke="#166dc1" stroke-width="2.9" stroke-linecap="round"/><path d="M-3.2 -3.2l6.4 6.4" fill="none" stroke="#e4eef8" stroke-width="1.1" stroke-linecap="round"/></g><rect x="411.1" y="4.05" width="0.8" height="7.5" fill="#76767c"/><g transform="translate(420,7.8)"><path d="M-5 0h3.4M-1.6 -3.6v7.2" fill="none" stroke="#166dc1" stroke-width="1.2" /><rect x="-1.6" y="-4.8" width="5.6" height="2.4" fill="#166dc1" /><rect x="-1.6" y="-1.2" width="5.6" height="2.4" fill="#166dc1" /><rect x="-1.6" y="2.4" width="5.6" height="2.4" fill="#166dc1" /><rect x="1" y="-4.8" width="0.5" height="9.6" fill="#cfe2f4" /></g><g transform="translate(434.4,7.8)"><g transform="scale(1.1)"><path d="M-4.6 4.4L-3.4 -1.4H1.2M4.4 0.4V4.4H-4.6" fill="none" stroke="#166dc1" stroke-width="1" stroke-linejoin="round"/><circle cx="3" cy="-2.8" r="1.9" fill="#eeeef0" stroke="#166dc1" stroke-width="0.9"/><path d="M-2 2.6l1.4-1.6 1 1.6" fill="none" stroke="#7fb2e0" stroke-width="0.7" /></g></g><g transform="translate(448,7.8)"><path d="M-5 -2.4h7.6l2.4 2.8-1.6 3.4h-5.8z" fill="#166dc1" /></g><g transform="translate(462,7.8)"><rect x="-0.75" y="-4.8" width="1.5" height="9.6" fill="#166dc1" /><rect x="-4.8" y="-0.75" width="9.6" height="1.5" fill="#166dc1" /></g><g transform="translate(475.8,7.8)"><rect x="-4.8" y="-4.6" width="9.6" height="2.6" fill="#166dc1" /><rect x="-4.8" y="-1.4" width="9.6" height="6" fill="#166dc1" /><path d="M-4.8 0.4h9.6M-4.8 2.4h9.6M-1.4 -1.4v6M1.6 -1.4v6" fill="none" stroke="#d6e6f6" stroke-width="0.6" /></g><g transform="translate(489.5,7.8)"><path d="M-4.6 -2.6h9.2M-4.6 2.6h9.2" fill="none" stroke="#7fb2e0" stroke-width="1" /><path d="M-4.6 0h9.2" fill="none" stroke="#166dc1" stroke-width="1.1" /><rect x="-1.6" y="-3.6" width="3.2" height="1.6" fill="#7fb2e0" /></g><g transform="translate(503.8,7.8)"><path d="M-5.2 -2.2L-3 -4.6H-0.6L0 -3.6L0.6 -4.6H3L5.2 -2.2L0 4.8z" fill="#166dc1" /><path d="M-2.4 -1.2l1.2-1.2 1.2 1.2 1.2-1.2 1.2 1.2-2.4 2.2z" fill="#e4eef8" /></g><g transform="translate(518,7.8)"><path d="M-4.6 -3.2Q-4.6 -4.8 -3 -4.8H0.6Q2 -4.8 2 -3.2V1.4H-4.6z" fill="#166dc1" /><path d="M-1.6 -1.8h5.8v6.6h-5.8z" fill="#166dc1" /><path d="M-0.4 0v3.6M1.2 0v3.6M2.8 0v3.6" fill="none" stroke="#bcd6ee" stroke-width="0.5" /></g><g transform="translate(532,7.8)"><path d="M-4.5 -3.8h9v9.2h-9z" fill="#166dc1" /><rect x="-1.3" y="-5.6" width="2.6" height="2.2" fill="#166dc1" /><rect x="-0.7" y="-0.4" width="1.4" height="1.8" fill="#d6e6f6" /></g><g transform="translate(545.9,7.8)"><path d="M-4.5 -3.8h9v9.2h-9z" fill="#166dc1" /><rect x="-1.3" y="-5.6" width="2.6" height="2.2" fill="#166dc1" /><rect x="-2.2" y="-0.2" width="4.4" height="0.9" fill="#bcd6ee" /></g><g transform="translate(559.8,7.8)"><path d="M-4.5 -3.8h9v9.2h-9z" fill="#166dc1" /><rect x="-1.3" y="-5.6" width="2.6" height="2.2" fill="#166dc1" /><rect x="-2" y="-0.4" width="1.6" height="1.8" fill="#d6e6f6" /><rect x="0.4" y="-0.4" width="1.6" height="1.8" fill="#d6e6f6" /></g><g transform="translate(573.7,7.8)"><path d="M-3.6 -3.6h7.2v8.6h-7.2z" fill="none" stroke="#4c92d4" stroke-width="0.9" /><rect x="-1.6" y="-5" width="3.2" height="2" fill="#4c92d4" /><path d="M-1.8 -0.6h3.6M-1.8 1.2h3.6M-1.8 3h2.4" fill="none" stroke="#166dc1" stroke-width="0.7" /></g><rect x="583.1" y="4.05" width="0.8" height="7.5" fill="#76767c"/><g transform="translate(591.6,7.8)"><g transform="scale(0.88)"><circle cx="0" cy="0" r="2.7" fill="none" stroke="#166dc1" stroke-width="2.2"/><rect x="-1" y="-5.2" width="2" height="2.4" fill="#166dc1" transform="rotate(0)"/><rect x="-1" y="-5.2" width="2" height="2.4" fill="#166dc1" transform="rotate(45)"/><rect x="-1" y="-5.2" width="2" height="2.4" fill="#166dc1" transform="rotate(90)"/><rect x="-1" y="-5.2" width="2" height="2.4" fill="#166dc1" transform="rotate(135)"/><rect x="-1" y="-5.2" width="2" height="2.4" fill="#166dc1" transform="rotate(180)"/><rect x="-1" y="-5.2" width="2" height="2.4" fill="#166dc1" transform="rotate(225)"/><rect x="-1" y="-5.2" width="2" height="2.4" fill="#166dc1" transform="rotate(270)"/><rect x="-1" y="-5.2" width="2" height="2.4" fill="#166dc1" transform="rotate(315)"/></g></g><g transform="translate(605.6,7.8)"><rect x="-4.8" y="-4.4" width="4.4" height="3.4" fill="#166dc1" /><rect x="-1.4" y="-2.2" width="4.2" height="3.2" fill="#166dc1" /><path d="M-3.6 0.8h3M1.4 2l3 2.6M1.4 2l3-1.6" fill="none" stroke="#166dc1" stroke-width="1" /><circle cx="-3.4" cy="1" r="1.2" fill="#166dc1" stroke="#166dc1" stroke-width="0"/><circle cx="4.2" cy="4.2" r="1" fill="#166dc1" stroke="#166dc1" stroke-width="0"/></g><g transform="translate(619.5,7.8)"><path d="M-4.6 -3.6h7.4v6.2h-7.4z" fill="none" stroke="#166dc1" stroke-width="1" /><path d="M-3.4 1.2l2-2.2 1.6 1.6 1-0.8" fill="none" stroke="#7fb2e0" stroke-width="0.7" /><path d="M3.6 -2.4v7M1.8 3l1.8 1.8L5.2 3" fill="none" stroke="#166dc1" stroke-width="1" /></g><g transform="translate(633.4,7.8)"><circle cx="0" cy="0" r="4.7" fill="none" stroke="#166dc1" stroke-width="1"/><text x="0" y="2.5" font-size="7.2" fill="#166dc1" font-weight="bold" text-anchor="middle" font-family="Liberation Sans, sans-serif">?</text></g><g transform="translate(647.3,7.8)"><path d="M-2.6 2.8h-0.8a2.2 2.2 0 0 1 0-4.6a3.3 3.3 0 0 1 6.4-0.4a2.5 2.5 0 0 1 0.6 5h-0.8" fill="none" stroke="#166dc1" stroke-width="1" /><path d="M0 5V0M-1.6 1.4L0 -0.2l1.6 1.6" fill="none" stroke="#166dc1" stroke-width="1" /></g><g transform="translate(661.2,7.8)"><path d="M-1 -4.5A4.6 4.6 0 0 0 -1.6 4.3" fill="none" stroke="#166dc1" stroke-width="1" /><path d="M1.4 -4.4A4.6 4.6 0 0 1 0.8 4.5" fill="none" stroke="#166dc1" stroke-width="1.3" /></g><rect x="672.55" y="2.8" width="0.9" height="1" fill="#b0b0b8"/><rect x="672.55" y="5.8" width="0.9" height="1" fill="#b0b0b8"/><rect x="672.55" y="8.8" width="0.9" height="1" fill="#b0b0b8"/><rect x="672.55" y="11.8" width="0.9" height="1" fill="#b0b0b8"/><g transform="translate(682.5,7.8)"><circle cx="1.2" cy="-1.2" r="3.7" fill="none" stroke="#166dc1" stroke-width="1.1"/><path d="M-1.4 1.6L-5 5.2" fill="none" stroke="#166dc1" stroke-width="1.3" /></g><g transform="translate(697.3,7.8)"><path d="M-4.8 4.4h9.6" fill="none" stroke="#166dc1" stroke-width="1.6" /><path d="M-4.4 4L3 -4.6" fill="none" stroke="#166dc1" stroke-width="1.2" /><path d="M-0.6 4A4 4 0 0 0 -2 0.6" fill="none" stroke="#166dc1" stroke-width="0.8" /></g><g transform="translate(711.2,7.8)"><path d="M0 -4.4v8.8" fill="none" stroke="#166dc1" stroke-width="1.5" /><path d="M-2.2 -4.6h4.4M-2.2 4.6h4.4" fill="none" stroke="#166dc1" stroke-width="1.1" /><path d="M-1.8 -2.2l1.8-2 1.8 2zM-1.8 2.2l1.8 2 1.8-2z" fill="#166dc1" /></g><g transform="translate(725,7.8)"><path d="M-4.8 1.8h9.6v3h-9.6z" fill="#166dc1" /><path d="M-3.8 1L3.4 -4.4" fill="none" stroke="#166dc1" stroke-width="1.2" /><path d="M-2.8 2.6v1M-0.8 2.6v1M1.2 2.6v1M3.2 2.6v1" fill="none" stroke="#cfe2f4" stroke-width="0.5" /></g><g transform="translate(739,7.8)"><path d="M-5 -1.6h9.4M5 1.8h-9.4" fill="none" stroke="#166dc1" stroke-width="1.1" /><path d="M2.2 -4l3.2 2.4h-3.2zM-2.2 4.2l-3.2-2.4h3.2z" fill="#166dc1" /></g><g transform="translate(753.8,7.8)"><rect x="-3.6" y="-4.6" width="8" height="2.2" rx="0.8" fill="#e8f0fa" stroke="#166dc1" stroke-width="0.9"/><rect x="-3.6" y="-1.1" width="8" height="2.2" rx="0.8" fill="#e8f0fa" stroke="#166dc1" stroke-width="0.9"/><rect x="-3.6" y="2.4" width="8" height="2.2" rx="0.8" fill="#e8f0fa" stroke="#166dc1" stroke-width="0.9"/><rect x="-5" y="-4.8" width="1.1" height="9.6" fill="#166dc1" /></g><g transform="translate(767.6,7.8)"><path d="M-4.6 -0.8h9.2v6.4h-9.2z" fill="#166dc1" /><path d="M-2.6 -0.8v-1.8a2.6 2.6 0 0 1 5.2 0v1.8" fill="none" stroke="#166dc1" stroke-width="1.4" /><rect x="-0.6" y="1" width="1.2" height="2.2" fill="#e4eef8" /></g><g transform="translate(781.5,7.8)"><circle cx="0" cy="-3.4" r="1.2" fill="#166dc1" stroke="#166dc1" stroke-width="0"/><path d="M-1 -1.8h2L4.4 4.6H-4.4z" fill="#166dc1" /><path d="M-2.6 -4.4l1.2 1M2.6 -4.4l-1.2 1" fill="none" stroke="#166dc1" stroke-width="0.6" /><rect x="-1" y="1.2" width="2" height="0.8" fill="#cfe2f4" /></g><g transform="translate(795,7.8)"><circle cx="-1.4" cy="-2.8" r="1.5" fill="#166dc1" stroke="#166dc1" stroke-width="0"/><path d="M-4.8 2.8Q-4.8 -0.8 -1.4 -0.8Q2 -0.8 2 2.8z" fill="#166dc1" /><circle cx="2.8" cy="-1.2" r="1.1" fill="#7fb2e0" stroke="#7fb2e0" stroke-width="0"/><path d="M1 3.6Q1 1 3 1Q5 1 5 3.6z" fill="#166dc1" /><path d="M-4.8 3.6h9.6" fill="none" stroke="#166dc1" stroke-width="0.8" /></g><g transform="translate(809,7.8)"><path d="M-4.4 -3.4h8.8v7.4h-8.8z" fill="none" stroke="#166dc1" stroke-width="0.9" /><path d="M-4.4 -1.2h8.8" fill="none" stroke="#166dc1" stroke-width="0.9" /><path d="M2.2 -1.2v5.2" fill="none" stroke="#7fb2e0" stroke-width="0.7" /></g><g transform="translate(823,7.8)"><rect x="-4.6" y="0" width="9.2" height="4.4" fill="#166dc1" /><path d="M-4.4 -0.2v-3M4.4 -0.2v-3" fill="none" stroke="#166dc1" stroke-width="0.8" /><path d="M-4.4 -3.4h8.8" fill="none" stroke="#7fb2e0" stroke-width="0.6" /></g><g transform="translate(837,7.8)"><rect x="-4.6" y="-4.4" width="9.2" height="8.8" fill="#166dc1" /><path d="M-2 -2.2h4v4.4h-4zM0 -2.2v4.4M-2 0h4" fill="none" stroke="#e4eef8" stroke-width="0.6" /></g><g transform="translate(851,7.8)"><path d="M-4.4 -4h8.8v8h-8.8z" fill="none" stroke="#166dc1" stroke-width="0.9" /><path d="M0 -4v8" fill="none" stroke="#166dc1" stroke-width="0.7" /><path d="M-2.6 0h5.2M-1.4 -1.2v2.4M1.4 -1.2v2.4" fill="none" stroke="#7fb2e0" stroke-width="0.7" /></g><g transform="translate(865,7.8)"><g transform="scale(1.15)"><path d="M-3.2 -5h6.4v2.2h-6.4z" fill="#166dc1" /><path d="M-4.4 -2h8.8Q5 -2 5 -1V3.6Q5 4.6 4 4.6H-4Q-5 4.6 -5 3.6V-1Q-5 -2 -4.4 -2z" fill="none" stroke="#166dc1" stroke-width="1" /><rect x="-3" y="1" width="6" height="2" fill="#166dc1" /><rect x="-5" y="-1" width="10" height="1.4" fill="#166dc1" /></g></g><g transform="translate(878.6,7.8)"><g transform="scale(1.15)"><path d="M-2.4 -4.6v9.2M0.4 -4.6v9.2" fill="none" stroke="#166dc1" stroke-width="1.3" /><path d="M-5 -1.8h7M-5 1.8h7" fill="none" stroke="#166dc1" stroke-width="1.2" /><path d="M2 -2.2h1.6L5.4 0 3.6 2.2H2z" fill="#166dc1" /></g></g><g transform="translate(893,7.8)"><g transform="scale(1.2)"><path d="M-5 4.6L5 -1.2V4.6z" fill="#166dc1" /><rect x="-1.6" y="-4" width="6.6" height="1.4" fill="#166dc1" /></g></g><g transform="translate(906.6,7.8)"><g transform="scale(1.22)"><rect x="-4.8" y="-4.8" width="9.6" height="9.6" fill="#166dc1" /><path d="M-3 -3l5.4 5.4" fill="none" stroke="#fff" stroke-width="1" /><circle cx="-3" cy="-3" r="1.1" fill="#fff" stroke="#fff" stroke-width="0"/><path d="M1.6 3.6l2.6 0.6-0.6-2.6z" fill="#fff" /></g></g><g transform="translate(920.7,7.8)"><g transform="scale(1.18)"><rect x="-4.6" y="-4.6" width="9.2" height="9.2" fill="#4c8fd2" /><rect x="-3.4" y="-3.4" width="1.6" height="1.6" fill="#e4eef8" /><rect x="0" y="-3.4" width="1.6" height="1.6" fill="#e4eef8" /><rect x="-1.8" y="-1.6" width="1.6" height="1.6" fill="#e4eef8" /><rect x="1.8" y="-1.6" width="1.6" height="1.6" fill="#e4eef8" /><rect x="-3.4" y="0.2" width="1.6" height="1.6" fill="#e4eef8" /><rect x="0" y="0.2" width="1.6" height="1.6" fill="#e4eef8" /><rect x="-1.8" y="2" width="1.6" height="1.6" fill="#e4eef8" /><rect x="2.6" y="2" width="1.6" height="1.6" fill="#e4eef8" /><path d="M-3 3l6-6" fill="none" stroke="#166dc1" stroke-width="0.8" /></g></g><rect x="928.6" y="0" width="0.8" height="16" fill="#e0e0e8"/></svg></div>
<div id="view" class="abs"><svg style="left:0;top:-60.2px" width="907" height="553" viewBox="0 0 907 553"><defs><clipPath id="oc"><path d="M435.4 108.5 L559.6 167.7 L632.1 288.6 L632.1 319.9 L531 481 Q520 498.5 506 498.5 Q482 497 467.6 477.6 L371.8 345.7 L357.9 300 L339.9 239.8 L329 205 Q325 178 340 158 Q352 146 365.7 139.8 L428 110 Q432 107.5 435.4 108.5 Z"/></clipPath><filter id="b1" x="-5%" y="-5%" width="110%" height="110%"><feGaussianBlur stdDeviation="0.35"/></filter><filter id="b2" x="-5%" y="-5%" width="110%" height="110%"><feGaussianBlur stdDeviation="1.6"/></filter></defs><g filter="url(#b1)"><path d="M435.4 108.5 L559.6 167.7 L632.1 288.6 L632.1 319.9 L531 481 Q520 498.5 506 498.5 Q482 497 467.6 477.6 L371.8 345.7 L357.9 300 L339.9 239.8 L329 205 Q325 178 340 158 Q352 146 365.7 139.8 L428 110 Q432 107.5 435.4 108.5 Z" fill="#fcf7f8"/><g clip-path="url(#oc)"><path d="M435.4 108.5 L559.6 167.7 L632.1 288.6 L632.1 319.9 L531 481 Q520 498.5 506 498.5 Q482 497 467.6 477.6 L371.8 345.7 L357.9 300 L339.9 239.8 L329 205 Q325 178 340 158 Q352 146 365.7 139.8 L428 110 Q432 107.5 435.4 108.5 Z" fill="none" stroke="#f6eef1" stroke-width="6" filter="url(#b2)"/><polygon points="431.8,119.5 423.4,125.9 407.5,139.8 393.6,149.7 381.7,157.7 379.7,162.6 359.8,175.6 345.9,185.5 333.9,191.5 334.5,197.0 337.9,200.0 349.8,229.8 363.8,259.7 371.7,283.5 379.8,300.0 391.7,323.9 413.6,365.6 439.4,410.0 485.5,485.5 488.0,487.5 505.4,487.5 519.3,482.5 527.3,481.5 531.3,473.6 527.3,465.6 521.3,447.7 521.3,429.8 523.0,424.0 527.3,416.9 545.2,409.9 559.1,400.0 565.5,393.5 569.5,383.5 573.5,367.6 587.4,347.7 595.4,325.9 599.3,323.0 603.3,318.0 604.3,309.5 604.6,299.6 604.9,289.6 603.7,279.7 598.0,266.0 587.4,248.0 583.0,245.5 575.5,238.0 571.0,229.0 560.0,227.6 540.0,228.5 520.0,227.5 500.0,228.8 471.2,227.8 455.2,223.9 447.3,200.0 447.3,189.5 441.3,165.6 439.3,155.7 439.3,145.7" fill="#c6fbc6" /><polygon points="578.4,205.5 578.4,228.0 587.4,243.9 591.4,245.9 605.3,244.9 591.4,220.0" fill="#c6fbc6" /><polygon points="610.3,323.9 603.0,327.0 595.4,345.7 590.0,347.0 596.0,328.0 604.0,319.0" fill="#c6fbc6" /><polygon points="545.2,411.9 541.2,421.9 535.2,431.8 537.2,443.8 535.2,455.0 532.5,470.0 527.0,462.0 523.0,445.0 523.0,428.0 530.0,416.0" fill="#c6fbc6" /><polygon points="399.6,224.9 425.4,220.9 427.4,237.8 423.4,247.7 409.5,251.7 399.6,257.7" fill="#faf4f6" /><polygon points="394.0,147.0 415.0,141.0 438.0,150.0 439.0,156.0 420.0,152.0 400.0,153.0" fill="#f7eff2" /><polygon points="396.0,166.0 410.0,170.0 420.0,195.0 430.0,210.0 416.0,205.0 404.0,180.0" fill="#f7eff2" /><polygon points="480.0,280.7 497.9,283.6 503.9,297.6 488.0,303.5 480.0,303.5 470.0,300.0 465.0,292.0 472.0,283.0" fill="#f7eff2" /><polygon points="537.7,253.8 545.6,271.7 549.6,287.6 563.5,291.6 577.5,299.6 594.0,300.0 590.4,314.9 583.4,318.9 575.5,313.5 568.5,313.5 567.5,327.4 548.6,307.5 543.6,287.6" fill="#f7eff2" /><polygon points="459.2,287.5 475.1,289.5 483.1,280.5 500.0,279.6 500.0,290.0 490.0,304.0 470.0,302.0 462.0,296.0" fill="#f7eff2" /><polygon points="490.0,305.0 497.0,309.0 505.0,313.0 509.0,318.0 500.0,314.0 493.0,310.0" fill="#f7eff2" /><polygon points="407.0,179.0 417.0,172.0 426.0,168.0 439.0,169.0 441.3,165.6 441.3,175.0 437.0,183.0 441.0,192.0 436.0,200.0 439.3,205.0 435.4,211.9 441.3,218.9 425.4,217.9 411.5,200.0 414.0,190.0" fill="#c6c6fa" /><polygon points="455.2,225.9 463.2,237.8 479.1,233.8 475.1,227.8 489.0,233.8 491.0,243.8 485.1,259.7 483.1,275.6 495.0,273.6 500.0,271.6 500.0,279.6 483.1,280.5 475.1,289.5 459.2,287.5 450.3,281.5 471.2,279.6 473.1,275.6 467.2,265.6 457.2,263.6 460.2,256.7 452.3,238.8" fill="#c6c6fa" /><polygon points="480.0,231.9 488.0,235.9 490.0,245.9 488.0,259.8 490.0,266.0 482.0,275.7 499.9,271.7 497.9,281.7 492.0,283.6 480.0,279.0" fill="#c6c6fa" /><polygon points="553.6,239.9 567.5,244.9 575.5,242.9 583.4,245.9 588.4,244.9 593.4,249.8 592.4,254.8 597.3,265.7 599.3,277.7 602.3,287.6 599.3,295.6 595.4,305.5 591.0,307.0 589.4,315.5 583.4,318.4 576.5,313.5 577.5,299.6 573.5,287.6 567.5,281.7 559.6,277.7 562.5,289.6 549.6,277.7 545.6,269.7 555.6,267.7 541.7,260.8 542.6,252.8 551.6,251.8 556.6,243.9" fill="#c6c6fa" /><polygon points="534.7,259.8 540.7,266.7 528.7,269.7" fill="#c6c6fa" /><polygon points="526.7,276.7 543.6,272.7 543.6,289.6 538.7,292.6" fill="#c6c6fa" /><polygon points="543.6,309.5 548.6,309.5 549.6,321.4 544.0,321.4" fill="#c6c6fa" /><polygon points="568.5,313.5 579.4,319.4 579.4,329.8 569.5,326.9" fill="#c6c6fa" /><polygon points="548.0,298.0 556.0,296.0 551.0,304.0" fill="#c6c6fa" /><polygon points="512.0,410.5 519.0,410.5 521.0,413.0 514.0,412.5" fill="#c6c6fa" /><polygon points="419.0,180.0 424.0,190.0 421.0,196.0 415.0,186.0" fill="#f7eff2" /><polygon points="462.0,249.0 468.0,252.0 470.0,262.0 461.0,258.0" fill="#f7eff2" /><polygon points="563.0,280.0 568.0,290.0 572.0,296.0 566.0,297.0 560.0,288.0" fill="#f7eff2" /><polygon points="379.7,162.6 395.0,163.0 392.0,172.0 382.0,178.0 378.0,190.0 375.7,200.0 371.7,215.9 367.7,225.9 372.7,233.8 365.7,241.8 368.0,248.0 355.8,233.8 351.8,225.9 349.8,200.0 352.0,186.0 359.8,175.6" fill="#fcfcb2" /><polygon points="340.0,188.0 345.9,185.5 342.0,200.0 341.0,207.0" fill="#fcfcb2" /><polygon points="379.0,163.5 385.0,163.0 384.0,169.0 380.0,171.5 378.5,168.0" fill="#c6fbc6" /><polygon points="366.7,187.0 371.0,185.6 374.0,189.0 372.0,194.0 368.0,192.0" fill="#c6fbc6" /><polygon points="357.0,178.0 362.0,175.0 361.0,182.0 356.0,186.0" fill="#c6fbc6" /><polygon points="352.0,203.0 356.0,200.0 357.0,212.0 353.0,216.0" fill="#c6fbc6" /><polygon points="406.0,145.0 412.0,143.0 415.0,150.0 409.0,148.0" fill="#fcfcb2" /><polygon points="397.0,191.0 404.0,186.0 401.0,194.0" fill="#fcfcb2" /><polygon points="407.5,279.6 414.5,286.5 409.5,290.5" fill="#fcfcb2" /><polygon points="407.5,293.5 419.4,301.4 421.5,304.0 421.5,317.9 403.6,304.0 403.5,300.0" fill="#fcfcb2" /><polygon points="419.6,319.9 451.4,329.8 477.2,341.8 483.2,347.7 471.3,347.7 474.3,359.7 467.3,351.7 451.4,353.7 447.4,363.6 442.4,351.7 435.5,345.7 427.5,335.8 409.6,327.8" fill="#fcfcb2" /><polygon points="411.6,350.7 421.5,353.7 441.4,350.7 445.4,363.6 447.4,368.6 459.3,370.6 447.4,374.6 467.3,380.5 479.2,383.5 492.1,392.5 471.3,385.5 457.3,387.5 453.4,399.4 444.4,389.5 443.4,377.6 431.5,363.6 421.5,355.7" fill="#fcfcb2" /><polygon points="457.3,314.9 469.3,325.9 469.3,331.8 461.0,326.0" fill="#fcfcb2" /><polygon points="489.0,257.8 505.9,261.8 522.8,260.8 524.7,255.8 526.7,262.8 532.7,256.8 528.7,269.7 515.8,277.7 509.8,277.7 507.8,285.6 499.9,285.6 499.9,278.7 507.8,273.7 501.9,265.8" fill="#fcfcb2" /><polygon points="489.0,291.6 497.9,298.6 488.0,302.5" fill="#fcfcb2" /><polygon points="517.8,297.6 507.8,307.5 512.8,301.5" fill="#fcfcb2" /><polygon points="555.6,323.4 563.5,330.0 565.5,329.8 564.5,337.8 553.6,349.7 554.6,339.8 547.6,337.8 543.6,345.7 533.7,351.7 519.8,355.7 513.8,367.6 497.9,378.6 498.9,359.7 505.9,353.7 517.8,346.7 521.8,339.8 543.6,335.8 551.6,333.8 552.0,327.0" fill="#fcfcb2" /><polygon points="543.6,381.5 543.6,388.5 535.7,385.5" fill="#fcfcb2" /><polygon points="502.9,387.5 515.8,385.5 516.8,395.5 513.4,400.0 514.4,411.9 508.4,413.9 507.4,408.0 502.4,409.0 504.0,396.0" fill="#fcfcb2" /><polygon points="480.0,345.0 483.0,348.0 481.0,349.0" fill="#fcfcb2" /><polyline points="444.3,114.3 447.0,122.0 451.3,135.8 463.2,165.6 471.2,187.5 476.0,193.5 485.0,197.5 495.0,198.0 509.8,191.6 525.0,190.0 539.7,190.6 549.6,193.6 557.6,203.5 565.5,223.4 573.5,237.9 585.4,252.8 599.3,265.7 611.3,283.6 619.2,299.6 628.2,313.5 632.5,320.0" fill="none" stroke="#e0e3e0" stroke-width="2.6" stroke-linejoin="round" stroke-linecap="round"/><polyline points="624.2,308.0 607.3,315.9 595.4,325.9 587.4,347.7 573.5,367.6 569.5,383.5 565.5,393.5 555.6,405.4 545.2,409.9 527.3,416.9 522.3,427.8 521.3,445.7 525.3,461.7 531.3,471.6 531.3,481.0" fill="none" stroke="#e0e3e0" stroke-width="2.3" stroke-linejoin="round" stroke-linecap="round"/></g></g></svg><div class="abs" style="left:211px;top:0;width:1px;height:478px;background:#2f9e3a"></div><div class="abs" style="left:-3px;top:-1px;font-size:6.6px;line-height:9px;color:#222">顶视图</div></div>
<div class="abs" style="left:72.6px;top:56.6px;width:122.2px;height:29.6px;background:#fff;border:1px solid #a4a4aa;border-top-color:#d0d0d6;border-left-color:#d0d0d6;box-shadow:0.5px 0.5px 1px rgba(0,0,0,.2)"><div class="abs" style="left:2.4px;top:3.2px;font-size:7.5px;line-height:11px;color:#1b3f6e;white-space:nowrap">山体分析</div><div class="abs" style="left:2.4px;top:16.2px;font-size:7px;line-height:11px;color:#24507e;white-space:nowrap">分析并显示满足设定山体要求的区域</div></div>
<svg style="left:68px;top:55px" width="8" height="12" viewBox="0 0 8 12"><path d="M1 0.5v9l2-2 1.5 3.2 1.3-.6L4.3 7H7z" fill="#fff" stroke="#111" stroke-width="0.7"/></svg>
<div class="abs" style="left:904px;top:60px;width:175px;height:477px;background:#f0f0f6"></div><div class="abs" style="left:907px;top:60px;width:172px;height:477px;background:#f2f6fb;overflow:hidden;border-left:1px solid #c2c4ca;border-bottom:1px solid #b8babf"><div class="abs" style="left:0;top:0;width:171px;height:16px;background:linear-gradient(#c3d6e8,#dce6f1)"><div class="abs" style="left:2.5px;top:3.8px;font-size:7.5px;line-height:11px;color:#111;white-space:nowrap">默认面板</div><svg style="left:152px;top:5px" width="18" height="7" viewBox="0 0 18 7"><path d="M1 0.5v6M5.5 0.5v6M1 3.5h4.5M3.2 1.5v3" stroke="#555" stroke-width="0.6" fill="none"/><path d="M12 1.2l4 4M16 1.2l-4 4" stroke="#666" stroke-width="0.6"/></svg></div><div class="abs" style="left:0;top:19px;width:171px;height:14.5px;background:#dedee6"><svg style="left:3.5px;top:4.2px" width="8" height="7" viewBox="0 0 8 7"><path d="M1 1.5l3 3 3-3" fill="none" stroke="#555" stroke-width="0.7"/></svg><div class="abs" style="left:14.5px;top:2.6px;font-size:6.9px;line-height:11px;color:#222;white-space:nowrap">图元信息</div><div class="abs" style="left:157.6px;top:1.2000000000000002px;width:11.6px;height:11.4px;background:#fff;border:1px solid #cfcfd6"><svg style="left:2.5px;top:2.7px" width="4" height="4" viewBox="0 0 4 4"><path d="M0 0l4 4M4 0l-4 4" stroke="#555" stroke-width="0.6"/></svg></div></div><div class="abs" style="left:5px;top:39px;font-size:7.4px;line-height:11px;color:#111;white-space:nowrap">没有选择内容</div><div class="abs" style="left:6px;top:52.6px;width:159px;height:1.5px;background:#dcdfe5"></div><div class="abs" style="left:0;top:168px;width:171px;height:15px;background:#dedee6"><svg style="left:3.5px;top:3.7px" width="8" height="7" viewBox="0 0 8 7"><path d="M2 0.5l3 3-3 3" fill="none" stroke="#555" stroke-width="0.7"/></svg><div class="abs" style="left:14.5px;top:2.6px;font-size:6.9px;line-height:11px;color:#222;white-space:nowrap">材质</div><div class="abs" style="left:157.6px;top:1.2000000000000002px;width:11.6px;height:11.4px;background:#fff;border:1px solid #cfcfd6"><svg style="left:2.5px;top:2.7px" width="4" height="4" viewBox="0 0 4 4"><path d="M0 0l4 4M4 0l-4 4" stroke="#555" stroke-width="0.6"/></svg></div></div><div class="abs" style="left:0;top:184px;width:171px;height:15px;background:#dedee6"><svg style="left:3.5px;top:3.7px" width="8" height="7" viewBox="0 0 8 7"><path d="M2 0.5l3 3-3 3" fill="none" stroke="#555" stroke-width="0.7"/></svg><div class="abs" style="left:14.5px;top:2.6px;font-size:6.9px;line-height:11px;color:#222;white-space:nowrap">组件</div><div class="abs" style="left:157.6px;top:1.2000000000000002px;width:11.6px;height:11.4px;background:#fff;border:1px solid #cfcfd6"><svg style="left:2.5px;top:2.7px" width="4" height="4" viewBox="0 0 4 4"><path d="M0 0l4 4M4 0l-4 4" stroke="#555" stroke-width="0.6"/></svg></div></div><div class="abs" style="left:0;top:200px;width:171px;height:15px;background:#dedee6"><svg style="left:3.5px;top:3.7px" width="8" height="7" viewBox="0 0 8 7"><path d="M2 0.5l3 3-3 3" fill="none" stroke="#555" stroke-width="0.7"/></svg><div class="abs" style="left:14.5px;top:2.6px;font-size:6.9px;line-height:11px;color:#222;white-space:nowrap">样式</div><div class="abs" style="left:157.6px;top:1.2000000000000002px;width:11.6px;height:11.4px;background:#fff;border:1px solid #cfcfd6"><svg style="left:2.5px;top:2.7px" width="4" height="4" viewBox="0 0 4 4"><path d="M0 0l4 4M4 0l-4 4" stroke="#555" stroke-width="0.6"/></svg></div></div><div class="abs" style="left:0;top:216px;width:171px;height:15px;background:#dedee6"><svg style="left:3.5px;top:4.2px" width="8" height="7" viewBox="0 0 8 7"><path d="M1 1.5l3 3 3-3" fill="none" stroke="#555" stroke-width="0.7"/></svg><div class="abs" style="left:14.5px;top:2.6px;font-size:6.9px;line-height:11px;color:#222;white-space:nowrap">标记</div><div class="abs" style="left:157.6px;top:1.2000000000000002px;width:11.6px;height:11.4px;background:#fff;border:1px solid #cfcfd6"><svg style="left:2.5px;top:2.7px" width="4" height="4" viewBox="0 0 4 4"><path d="M0 0l4 4M4 0l-4 4" stroke="#555" stroke-width="0.6"/></svg></div></div><div class="abs" style="left:0;top:231px;width:171px;height:20px;background:#f2f6fb"><svg style="left:8px;top:6px" width="8" height="8" viewBox="0 0 8 8"><circle cx="4" cy="4" r="3.2" fill="none" stroke="#777" stroke-width="0.7"/><path d="M4 2.2v3.6M2.2 4h3.6" stroke="#777" stroke-width="0.7"/></svg><svg style="left:27px;top:5px" width="12" height="10" viewBox="0 0 12 10"><path d="M1 1v7M4 1h3" stroke="#444" stroke-width="0.7" fill="none"/><path d="M6 4.5h4.5v4H6z" fill="none" stroke="#444" stroke-width="0.7"/><path d="M8.2 2v3M6.8 3.5h2.8" stroke="#444" stroke-width="0.7"/></svg><div class="abs" style="left:44px;top:3px;width:61px;height:13.5px;background:#fff;border:1px solid #aeb2b8;border-top-color:#888"><div class="abs" style="left:2px;top:0.5px;font-size:6.5px;line-height:10px;color:#bbb">搜索</div></div><svg style="left:111px;top:5px" width="10" height="10" viewBox="0 0 10 10"><path d="M4.5 1.5h4v4L4.8 9 1.2 5.2z" fill="none" stroke="#888" stroke-width="0.7"/><circle cx="7" cy="3" r="0.6" fill="#888"/></svg><svg style="left:132px;top:4px" width="11" height="11" viewBox="0 0 11 11"><circle cx="5" cy="5" r="3.6" fill="none" stroke="#777" stroke-width="0.7"/><path d="M2 7.5l6-5M3 8.5l6-5" stroke="#777" stroke-width="0.6"/><path d="M7 7l2.5 2.5" stroke="#777" stroke-width="0.9"/></svg><svg style="left:152px;top:5px" width="11" height="10" viewBox="0 0 11 10"><path d="M1 2h4v6H1z" fill="none" stroke="#111" stroke-width="0.8"/><path d="M1 1.5h4" stroke="#2a8ad0" stroke-width="1"/><path d="M5.5 1.2l4.2 3.8-4.2 3.8z" fill="#111"/></svg></div><div class="abs" style="left:0;top:251px;width:161px;height:153px;background:#fff;overflow:hidden"><div class="abs" style="left:0;top:0;width:161px;height:11.6px;background:#fff;border-bottom:1px solid #e2e2e8"><div class="abs" style="left:30px;top:0;width:1px;height:11px;background:#e0e0e6"></div><div class="abs" style="left:67px;top:0;width:1px;height:11px;background:#e0e0e6"></div><div class="abs" style="left:96px;top:0;width:1px;height:11px;background:#e0e0e6"></div><div class="abs" style="left:131px;top:0;width:1px;height:11px;background:#e0e0e6"></div><div class="abs" style="left:32px;top:1.2px;font-size:6.8px;line-height:10px;color:#222">名称</div><svg style="left:60px;top:4.8px" width="4" height="3" viewBox="0 0 4 3"><path d="M0.3 2.6L2 0.6l1.7 2" fill="none" stroke="#444" stroke-width="0.6"/></svg><div class="abs" style="left:97.5px;top:1.2px;font-size:6.8px;line-height:10px;color:#222">虚线</div></div><div class="abs" style="left:0;top:11.50px;width:161px;height:10px"><svg style="left:12px;top:2.2px" width="8" height="6" viewBox="0 0 8 6"><path d="M0.3 3C1.6 0.9 6.4 0.9 7.7 3 6.4 5.1 1.6 5.1 0.3 3z" fill="#fff" stroke="#111" stroke-width="0.7"/><circle cx="4" cy="3" r="1.5" fill="#111"/></svg><div class="abs" style="left:31.2px;top:0;font-size:7.35px;line-height:10px;color:#2a2a2e;white-space:nowrap">Arrayfied...</div><div class="abs" style="left:77px;top:0.4px;width:10px;height:9.2px;background:#6b2170"></div><div class="abs" style="left:97px;top:0;font-size:7.4px;line-height:10px;color:#2a2a2e;white-space:nowrap">默认</div></div><div class="abs" style="left:0;top:21.42px;width:161px;height:10px"><svg style="left:12px;top:2.2px" width="8" height="6" viewBox="0 0 8 6"><path d="M0.3 3C1.6 0.9 6.4 0.9 7.7 3 6.4 5.1 1.6 5.1 0.3 3z" fill="none" stroke="#aaa" stroke-width="0.6"/></svg><div class="abs" style="left:31.2px;top:0;font-size:7.35px;line-height:10px;color:#a6a6aa;white-space:nowrap">CAD-imp...</div><div class="abs" style="left:77px;top:0.4px;width:10px;height:9.2px;background:#0d8dbd"></div><div class="abs" style="left:97px;top:0;font-size:7.4px;line-height:10px;color:#a6a6aa;white-space:nowrap">默认</div></div><div class="abs" style="left:0;top:31.34px;width:161px;height:10px"><svg style="left:12px;top:2.2px" width="8" height="6" viewBox="0 0 8 6"><path d="M0.3 3C1.6 0.9 6.4 0.9 7.7 3 6.4 5.1 1.6 5.1 0.3 3z" fill="#fff" stroke="#111" stroke-width="0.7"/><circle cx="4" cy="3" r="1.5" fill="#111"/></svg><div class="abs" style="left:31.2px;top:0;font-size:7.35px;line-height:10px;color:#2a2a2e;white-space:nowrap">Combiner1</div><div class="abs" style="left:77px;top:0.4px;width:10px;height:9.2px;background:#0d8dbd"></div><div class="abs" style="left:97px;top:0;font-size:7.4px;line-height:10px;color:#2a2a2e;white-space:nowrap">默认</div></div><div class="abs" style="left:0;top:41.26px;width:161px;height:10px"><svg style="left:12px;top:2.2px" width="8" height="6" viewBox="0 0 8 6"><path d="M0.3 3C1.6 0.9 6.4 0.9 7.7 3 6.4 5.1 1.6 5.1 0.3 3z" fill="none" stroke="#aaa" stroke-width="0.6"/></svg><div class="abs" style="left:31.2px;top:0;font-size:7.35px;line-height:10px;color:#a6a6aa;white-space:nowrap">DCX</div><div class="abs" style="left:77px;top:0.4px;width:10px;height:9.2px;background:#fdb812"></div><div class="abs" style="left:97.5px;top:4.6px;width:35px;height:1px;background:#111"></div></div><div class="abs" style="left:0;top:51.18px;width:161px;height:10px"><svg style="left:12px;top:2.2px" width="8" height="6" viewBox="0 0 8 6"><path d="M0.3 3C1.6 0.9 6.4 0.9 7.7 3 6.4 5.1 1.6 5.1 0.3 3z" fill="#fff" stroke="#111" stroke-width="0.7"/><circle cx="4" cy="3" r="1.5" fill="#111"/></svg><div class="abs" style="left:31.2px;top:0;font-size:7.35px;line-height:10px;color:#2a2a2e;white-space:nowrap">GCB</div><div class="abs" style="left:77px;top:0.4px;width:10px;height:9.2px;background:#be4a0f"></div><div class="abs" style="left:97.5px;top:4.6px;width:35px;height:1px;background:#111"></div></div><div class="abs" style="left:0;top:61.10px;width:161px;height:10px"><svg style="left:12px;top:2.2px" width="8" height="6" viewBox="0 0 8 6"><path d="M0.3 3C1.6 0.9 6.4 0.9 7.7 3 6.4 5.1 1.6 5.1 0.3 3z" fill="#fff" stroke="#111" stroke-width="0.7"/><circle cx="4" cy="3" r="1.5" fill="#111"/></svg><div class="abs" style="left:31.2px;top:0;font-size:7.35px;line-height:10px;color:#2a2a2e;white-space:nowrap">Pole</div><div class="abs" style="left:77px;top:0.4px;width:10px;height:9.2px;background:#be4a0f"></div><div class="abs" style="left:97px;top:0;font-size:7.4px;line-height:10px;color:#2a2a2e;white-space:nowrap">默认</div></div><div class="abs" style="left:0;top:71.02px;width:161px;height:10px"><svg style="left:12px;top:2.2px" width="8" height="6" viewBox="0 0 8 6"><path d="M0.3 3C1.6 0.9 6.4 0.9 7.7 3 6.4 5.1 1.6 5.1 0.3 3z" fill="#fff" stroke="#111" stroke-width="0.7"/><circle cx="4" cy="3" r="1.5" fill="#111"/></svg><div class="abs" style="left:31.2px;top:0;font-size:7.35px;line-height:10px;color:#2a2a2e;white-space:nowrap">Rack</div><div class="abs" style="left:77px;top:0.4px;width:10px;height:9.2px;background:#c8620c"></div><div class="abs" style="left:97px;top:0;font-size:7.4px;line-height:10px;color:#2a2a2e;white-space:nowrap">默认</div></div><div class="abs" style="left:0;top:80.94px;width:161px;height:10px"><svg style="left:12px;top:2.2px" width="8" height="6" viewBox="0 0 8 6"><path d="M0.3 3C1.6 0.9 6.4 0.9 7.7 3 6.4 5.1 1.6 5.1 0.3 3z" fill="#fff" stroke="#111" stroke-width="0.7"/><circle cx="4" cy="3" r="1.5" fill="#111"/></svg><div class="abs" style="left:31.2px;top:0;font-size:7.35px;line-height:10px;color:#2a2a2e;white-space:nowrap">road</div><div class="abs" style="left:77px;top:0.4px;width:10px;height:9.2px;background:#c8620c"></div><div class="abs" style="left:97px;top:0;font-size:7.4px;line-height:10px;color:#2a2a2e;white-space:nowrap">默认</div></div><div class="abs" style="left:0;top:90.86px;width:161px;height:10px"><svg style="left:12px;top:2.2px" width="8" height="6" viewBox="0 0 8 6"><path d="M0.3 3C1.6 0.9 6.4 0.9 7.7 3 6.4 5.1 1.6 5.1 0.3 3z" fill="#fff" stroke="#111" stroke-width="0.7"/><circle cx="4" cy="3" r="1.5" fill="#111"/></svg><div class="abs" style="left:31.2px;top:0;font-size:7.35px;line-height:10px;color:#2a2a2e;white-space:nowrap">shading ...</div><div class="abs" style="left:77px;top:0.4px;width:10px;height:9.2px;background:#c8620c"></div><div class="abs" style="left:97px;top:0;font-size:7.4px;line-height:10px;color:#2a2a2e;white-space:nowrap">默认</div></div><div class="abs" style="left:0;top:100.78px;width:161px;height:10px"><svg style="left:12px;top:2.2px" width="8" height="6" viewBox="0 0 8 6"><path d="M0.3 3C1.6 0.9 6.4 0.9 7.7 3 6.4 5.1 1.6 5.1 0.3 3z" fill="#fff" stroke="#111" stroke-width="0.7"/><circle cx="4" cy="3" r="1.5" fill="#111"/></svg><div class="abs" style="left:31.2px;top:0;font-size:7.35px;line-height:10px;color:#2a2a2e;white-space:nowrap">Terrain</div><div class="abs" style="left:77px;top:0.4px;width:10px;height:9.2px;background:#6d7593"></div><div class="abs" style="left:97px;top:0;font-size:7.4px;line-height:10px;color:#2a2a2e;white-space:nowrap">默认</div></div><div class="abs" style="left:0;top:110.70px;width:161px;height:10px"><svg style="left:12px;top:2.2px" width="8" height="6" viewBox="0 0 8 6"><path d="M0.3 3C1.6 0.9 6.4 0.9 7.7 3 6.4 5.1 1.6 5.1 0.3 3z" fill="none" stroke="#aaa" stroke-width="0.6"/></svg><div class="abs" style="left:31.2px;top:0;font-size:7.35px;line-height:10px;color:#a6a6aa;white-space:nowrap">terrain_r...</div><div class="abs" style="left:77px;top:0.4px;width:10px;height:9.2px;background:#0d8dbd"></div><div class="abs" style="left:97px;top:0;font-size:7.4px;line-height:10px;color:#a6a6aa;white-space:nowrap">默认</div></div><div class="abs" style="left:0;top:120.62px;width:161px;height:10px"><svg style="left:12px;top:2.2px" width="8" height="6" viewBox="0 0 8 6"><path d="M0.3 3C1.6 0.9 6.4 0.9 7.7 3 6.4 5.1 1.6 5.1 0.3 3z" fill="#fff" stroke="#111" stroke-width="0.7"/><circle cx="4" cy="3" r="1.5" fill="#111"/></svg><div class="abs" style="left:31.2px;top:0;font-size:7.35px;line-height:10px;color:#2a2a2e;white-space:nowrap">Transfor...</div><div class="abs" style="left:77px;top:0.4px;width:10px;height:9.2px;background:#fdb812"></div><div class="abs" style="left:97px;top:0;font-size:7.4px;line-height:10px;color:#2a2a2e;white-space:nowrap">默认</div></div><div class="abs" style="left:0;top:130.54px;width:161px;height:10px"><svg style="left:12px;top:2.2px" width="8" height="6" viewBox="0 0 8 6"><path d="M0.3 3C1.6 0.9 6.4 0.9 7.7 3 6.4 5.1 1.6 5.1 0.3 3z" fill="#fff" stroke="#111" stroke-width="0.7"/><circle cx="4" cy="3" r="1.5" fill="#111"/></svg><div class="abs" style="left:31.2px;top:0;font-size:7.35px;line-height:10px;color:#2a2a2e;white-space:nowrap">电缆沟槽...</div><div class="abs" style="left:77px;top:0.4px;width:10px;height:9.2px;background:#22c6e6"></div><div class="abs" style="left:97.5px;top:4.6px;width:35px;height:1px;background:#111"></div></div><div class="abs" style="left:0;top:140.46px;width:161px;height:10px"><svg style="left:12px;top:2.2px" width="8" height="6" viewBox="0 0 8 6"><path d="M0.3 3C1.6 0.9 6.4 0.9 7.7 3 6.4 5.1 1.6 5.1 0.3 3z" fill="#fff" stroke="#111" stroke-width="0.7"/><circle cx="4" cy="3" r="1.5" fill="#111"/></svg><div class="abs" style="left:31.2px;top:0;font-size:7.35px;line-height:10px;color:#2a2a2e;white-space:nowrap">图块-可用</div><div class="abs" style="left:97.5px;top:4.6px;width:35px;height:1px;background:#111"></div></div><div class="abs" style="left:0;top:150.38px;width:161px;height:10px"><svg style="left:12px;top:2.2px" width="8" height="6" viewBox="0 0 8 6"><path d="M0.3 3C1.6 0.9 6.4 0.9 7.7 3 6.4 5.1 1.6 5.1 0.3 3z" fill="#fff" stroke="#111" stroke-width="0.7"/><circle cx="4" cy="3" r="1.5" fill="#111"/></svg><div class="abs" style="left:31.2px;top:0;font-size:7.35px;line-height:10px;color:#2a2a2e;white-space:nowrap">图块-禁用</div></div></div><div class="abs" style="left:161px;top:251px;width:8px;height:153px;background:#fcfcfd;border-left:1px solid #ececf0;border-right:1px solid #ececf0"><svg style="left:1px;top:1.6px" width="4" height="3" viewBox="0 0 4 3"><path d="M0.4 2.4l1.6-1.8 1.6 1.8" fill="none" stroke="#888" stroke-width="0.6"/></svg><div class="abs" style="left:-1px;top:8px;width:8px;height:15px;background:#e7e7ea"></div><div class="abs" style="left:0;top:143px;width:8px;height:0.6px;background:#d4d4d8"></div><svg style="left:2px;top:146.6px" width="4" height="3" viewBox="0 0 4 3"><path d="M0 0h4L2 2.6z" fill="#8a8a90"/></svg></div><div class="abs" style="left:0;top:412.7px;width:172px;height:49.3px;background:#dedee6"></div><div class="abs" style="left:0;top:414.4px;width:171px;height:15.4px;background:#dedee6"><svg style="left:3.5px;top:4.7px" width="8" height="7" viewBox="0 0 8 7"><path d="M2 0.5l3 3-3 3" fill="none" stroke="#555" stroke-width="0.7"/></svg><div class="abs" style="left:14.5px;top:3.6px;font-size:6.9px;line-height:11px;color:#222;white-space:nowrap">阴影</div><div class="abs" style="left:157.6px;top:2.1999999999999997px;width:11.6px;height:11.4px;background:#fff;border:1px solid #cfcfd6"><svg style="left:2.5px;top:2.7px" width="4" height="4" viewBox="0 0 4 4"><path d="M0 0l4 4M4 0l-4 4" stroke="#555" stroke-width="0.6"/></svg></div></div><div class="abs" style="left:0;top:430.4px;width:171px;height:15.4px;background:#dedee6"><svg style="left:3.5px;top:4.7px" width="8" height="7" viewBox="0 0 8 7"><path d="M2 0.5l3 3-3 3" fill="none" stroke="#555" stroke-width="0.7"/></svg><div class="abs" style="left:14.5px;top:3.6px;font-size:6.9px;line-height:11px;color:#222;white-space:nowrap">场景</div><div class="abs" style="left:157.6px;top:2.1999999999999997px;width:11.6px;height:11.4px;background:#fff;border:1px solid #cfcfd6"><svg style="left:2.5px;top:2.7px" width="4" height="4" viewBox="0 0 4 4"><path d="M0 0l4 4M4 0l-4 4" stroke="#555" stroke-width="0.6"/></svg></div></div><div class="abs" style="left:0;top:446.6px;width:171px;height:15.4px;background:#dedee6"><svg style="left:3.5px;top:4.7px" width="8" height="7" viewBox="0 0 8 7"><path d="M2 0.5l3 3-3 3" fill="none" stroke="#555" stroke-width="0.7"/></svg><div class="abs" style="left:14.5px;top:3.6px;font-size:6.9px;line-height:11px;color:#222;white-space:nowrap">工具向导</div><div class="abs" style="left:157.6px;top:2.1999999999999997px;width:11.6px;height:11.4px;background:#fff;border:1px solid #cfcfd6"><svg style="left:2.5px;top:2.7px" width="4" height="4" viewBox="0 0 4 4"><path d="M0 0l4 4M4 0l-4 4" stroke="#555" stroke-width="0.6"/></svg></div></div><div class="abs" style="left:0;top:430px;width:172px;height:0.7px;background:#ececf2"></div><div class="abs" style="left:0;top:446px;width:172px;height:0.7px;background:#ececf2"></div></div>
<div id="status" class="abs"><svg style="left:3px;top:4.6px" width="28" height="9" viewBox="0 0 28 9"><circle cx="4.5" cy="4.5" r="2.8" fill="none" stroke="#aaa" stroke-width="0.7"/><text x="4.5" y="6.3" font-size="4.5" text-anchor="middle" fill="#aaa" font-family="Liberation Sans, sans-serif">?</text><circle cx="20" cy="4.5" r="2.9" fill="none" stroke="#222" stroke-width="0.8"/><text x="20" y="6.4" font-size="5" text-anchor="middle" fill="#222" font-weight="bold" font-family="Liberation Sans, sans-serif">i</text></svg><div class="abs" style="left:35px;top:2px;width:1px;height:13px;background:#d8d8de"></div><div class="abs" style="left:39.8px;top:4.8px;font-size:7.5px;line-height:10px;color:#222;white-space:nowrap">分析并显示满足设定山体要求的区域</div><div class="abs" style="left:939.4px;top:2.6px;width:1px;height:14px;background:#dcdce2"></div><div class="abs" style="left:949.4px;top:1px;width:116.4px;height:16px;background:#f2f2f7;border:1px solid #b4b4ba"></div></div>
</body></html>
